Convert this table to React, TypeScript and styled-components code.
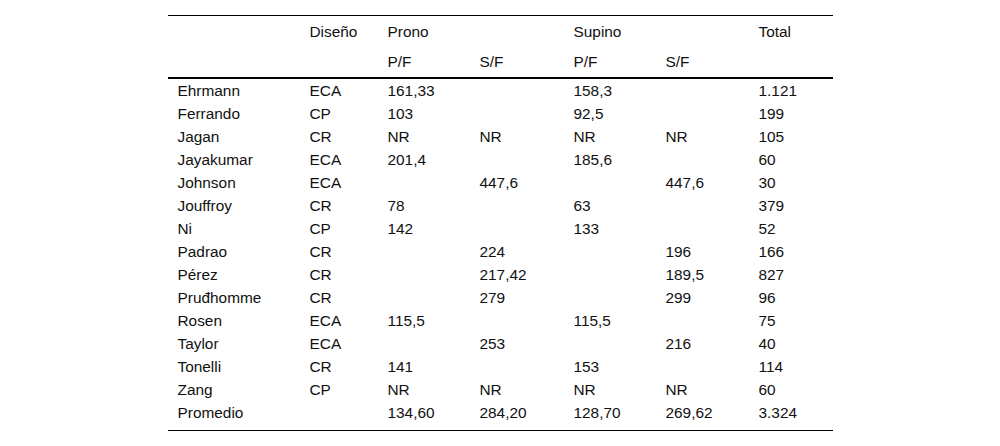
import React from 'react'
import styled, { createGlobalStyle } from 'styled-components'

const GlobalStyle = createGlobalStyle`
  body {
    margin: 0;
    background: #fff;
    font-family: "Liberation Sans", Arial, sans-serif;
    color: #111;
  }
`

const Page = styled.div`
  padding-top: 15px;
`

const Table = styled.table`
  width: 665px;
  margin: 0 auto;
  border-collapse: collapse;
  font-size: 15.4px;
  border-top: 1px solid #000;
  border-bottom: 1px solid #000;
`

const HeadCell = styled.th<{ last?: boolean }>`
  font-weight: normal;
  text-align: left;
  padding: 0 0 0 10px;
  height: ${p => (p.last ? 30 : 31)}px;
  vertical-align: middle;
`

const HeadRow = styled.tr<{ last?: boolean }>`
  border-bottom: ${p => (p.last ? '2px solid #000' : 'none')};
`

const Cell = styled.td<{ pad?: boolean }>`
  padding: 0 0 ${p => (p.pad ? 6 : 0)}px 10px;
  height: 23px;
  line-height: 23px;
  white-space: nowrap;
`

const widths = [132, 78, 92, 94, 92, 93, 84]

type Row = [string, string, string, string, string, string, string]

const rows: Row[] = [
  ['Ehrmann', 'ECA', '161,33', '', '158,3', '', '1.121'],
  ['Ferrando', 'CP', '103', '', '92,5', '', '199'],
  ['Jagan', 'CR', 'NR', 'NR', 'NR', 'NR', '105'],
  ['Jayakumar', 'ECA', '201,4', '', '185,6', '', '60'],
  ['Johnson', 'ECA', '', '447,6', '', '447,6', '30'],
  ['Jouffroy', 'CR', '78', '', '63', '', '379'],
  ['Ni', 'CP', '142', '', '133', '', '52'],
  ['Padrao', 'CR', '', '224', '', '196', '166'],
  ['Pérez', 'CR', '', '217,42', '', '189,5', '827'],
  ['Pruđhomme', 'CR', '', '279', '', '299', '96'],
  ['Rosen', 'ECA', '115,5', '', '115,5', '', '75'],
  ['Taylor', 'ECA', '', '253', '', '216', '40'],
  ['Tonelli', 'CR', '141', '', '153', '', '114'],
  ['Zang', 'CP', 'NR', 'NR', 'NR', 'NR', '60'],
  ['Promedio', '', '134,60', '284,20', '128,70', '269,62', '3.324'],
]

export default function App() {
  return (
    <Page>
      <GlobalStyle />
      <Table>
        <colgroup>
          {widths.map((w, i) => (
            <col key={i} style={{ width: w }} />
          ))}
        </colgroup>
        <thead>
          <HeadRow>
            <HeadCell />
            <HeadCell>Diseño</HeadCell>
            <HeadCell colSpan={2}>Prono</HeadCell>
            <HeadCell colSpan={2}>Supino</HeadCell>
            <HeadCell>Total</HeadCell>
          </HeadRow>
          <HeadRow last>
            <HeadCell last />
            <HeadCell last />
            <HeadCell last>P/F</HeadCell>
            <HeadCell last>S/F</HeadCell>
            <HeadCell last>P/F</HeadCell>
            <HeadCell last>S/F</HeadCell>
            <HeadCell last />
          </HeadRow>
        </thead>
        <tbody>
          {rows.map((r, i) => (
            <tr key={r[0]}>
              {r.map((c, j) => (
                <Cell key={j} pad={i === rows.length - 1}>
                  {c}
                </Cell>
              ))}
            </tr>
          ))}
        </tbody>
      </Table>
    </Page>
  )
}
